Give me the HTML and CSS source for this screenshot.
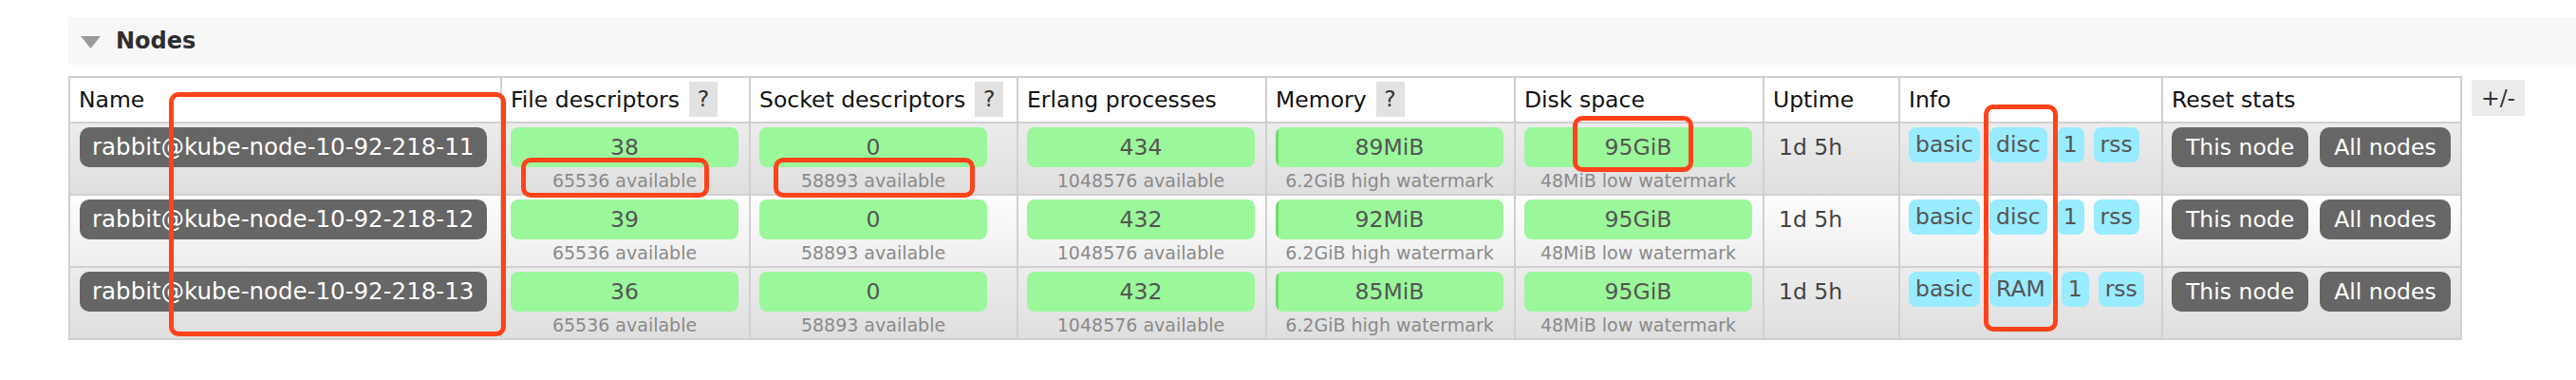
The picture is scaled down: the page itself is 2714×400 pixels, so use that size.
FILE: index.html
```html
<!DOCTYPE html>
<html>
<head>
<meta charset="utf-8">
<title>Nodes</title>
<link rel="stylesheet" href="styles.css">
</head>
<body>
<div class="page">
  <div class="section-head">
    <svg class="tri" width="21" height="13" viewBox="0 0 21 13"><polygon points="0,0 21,0 10.5,13" fill="#9b9b9b"/></svg>
    <h2 class="title">Nodes</h2>
  </div>
  <div class="table-wrap">
    <table class="list">
      <thead>
        <tr>
          <th class="c-name">Name</th>
          <th class="c-fd">File descriptors<span class="help">?</span></th>
          <th class="c-sd">Socket descriptors<span class="help">?</span></th>
          <th class="c-ep">Erlang processes</th>
          <th class="c-mem">Memory<span class="help">?</span></th>
          <th class="c-disk">Disk space</th>
          <th class="c-up">Uptime</th>
          <th class="c-info">Info</th>
          <th class="c-reset">Reset stats</th>
        </tr>
      </thead>
      <tbody>
        <tr class="alt1">
          <td><span class="node">rabbit@kube-node-10-92-218-11</span></td>
          <td><div class="bar">38</div><div class="sub">65536 available</div></td>
          <td><div class="bar">0</div><div class="sub">58893 available</div></td>
          <td><div class="bar">434</div><div class="sub">1048576 available</div></td>
          <td><div class="bar"><span class="fill" style="width:1.4%"></span><span class="val">89MiB</span></div><div class="sub">6.2GiB high watermark</div></td>
          <td><div class="bar">95GiB</div><div class="sub">48MiB low watermark</div></td>
          <td><div class="uptime">1d 5h</div></td>
          <td><div class="tags"><span class="tag">basic</span><span class="tag">disc</span><span class="tag">1</span><span class="tag">rss</span></div></td>
          <td><div class="btns"><span class="btn">This node</span><span class="btn">All nodes</span></div></td>
        </tr>
        <tr class="alt2">
          <td><span class="node">rabbit@kube-node-10-92-218-12</span></td>
          <td><div class="bar">39</div><div class="sub">65536 available</div></td>
          <td><div class="bar">0</div><div class="sub">58893 available</div></td>
          <td><div class="bar">432</div><div class="sub">1048576 available</div></td>
          <td><div class="bar"><span class="fill" style="width:1.4%"></span><span class="val">92MiB</span></div><div class="sub">6.2GiB high watermark</div></td>
          <td><div class="bar">95GiB</div><div class="sub">48MiB low watermark</div></td>
          <td><div class="uptime">1d 5h</div></td>
          <td><div class="tags"><span class="tag">basic</span><span class="tag">disc</span><span class="tag">1</span><span class="tag">rss</span></div></td>
          <td><div class="btns"><span class="btn">This node</span><span class="btn">All nodes</span></div></td>
        </tr>
        <tr class="alt1">
          <td><span class="node">rabbit@kube-node-10-92-218-13</span></td>
          <td><div class="bar">36</div><div class="sub">65536 available</div></td>
          <td><div class="bar">0</div><div class="sub">58893 available</div></td>
          <td><div class="bar">432</div><div class="sub">1048576 available</div></td>
          <td><div class="bar"><span class="fill" style="width:1.3%"></span><span class="val">85MiB</span></div><div class="sub">6.2GiB high watermark</div></td>
          <td><div class="bar">95GiB</div><div class="sub">48MiB low watermark</div></td>
          <td><div class="uptime">1d 5h</div></td>
          <td><div class="tags"><span class="tag">basic</span><span class="tag">RAM</span><span class="tag">1</span><span class="tag">rss</span></div></td>
          <td><div class="btns"><span class="btn">This node</span><span class="btn">All nodes</span></div></td>
        </tr>
      </tbody>
    </table>
    <span class="toggle">+/-</span>
  </div>

  <div class="mark mark-name"></div>
  <div class="mark mark-fd"></div>
  <div class="mark mark-sd"></div>
  <div class="mark mark-disk"></div>
  <div class="mark mark-info"></div>
</div>
</body>
</html>
```

FILE: styles.css
```css
html, body {
  margin: 0;
  padding: 0;
  background: #ffffff;
}

body {
  font-family: "DejaVu Sans", Verdana, sans-serif;
  font-size: 23.5px;
  color: #222;
}

.page {
  position: relative;
  width: 2714px;
  height: 400px;
  padding: 18px 0 0 72px;
  box-sizing: border-box;
  overflow: hidden;
}

.section-head {
  display: flex;
  align-items: center;
  gap: 16px;
  height: 50px;
  padding-left: 13px;
  background: #f7f7f7;
  margin-right: -2px;
}

.tri {
  display: block;
  margin-top: 2px;
}

.title {
  margin: 0;
  font-size: 24px;
  font-weight: bold;
  color: #2e2e2e;
}

.table-wrap {
  display: flex;
  align-items: flex-start;
  margin-top: 12px;
}

.list {
  table-layout: fixed;
  width: 2522px;
  border-collapse: separate;
  border-spacing: 0;
  border-top: 2px solid #d0d0d0;
  border-left: 2px solid #d0d0d0;
}

.list th,
.list td {
  box-sizing: border-box;
  border-right: 2px solid #d0d0d0;
  border-bottom: 2px solid #d0d0d0;
  padding: 4px 9px 0;
  text-align: left;
  vertical-align: top;
}

.list th {
  font-weight: normal;
  line-height: 38px;
  padding-bottom: 4px;
  background: #ffffff;
  color: #111;
  white-space: nowrap;
}

.c-name { width: 455px; }
.c-fd { width: 262px; }
.c-sd { width: 282px; }
.c-ep { width: 262px; }
.c-mem { width: 262px; }
.c-disk { width: 262px; }
.c-up { width: 143px; }
.c-info { width: 277px; }
.c-reset { width: 315px; }

.help {
  display: inline-block;
  vertical-align: top;
  width: 30px;
  height: 37px;
  line-height: 37px;
  margin-left: 10px;
  text-align: center;
  background: #e2e2e2;
  color: #333;
}

.list td {
  height: 76px;
}

tr.alt1 td {
  background: linear-gradient(#ececec, #dfdfdf);
}

tr.alt2 td {
  background: linear-gradient(#fdfdfd, #eeeeee);
}

.node {
  display: inline-block;
  height: 42px;
  line-height: 42px;
  padding: 0 14px 0 13px;
  margin-left: 1px;
  border-radius: 10px;
  background: #666666;
  color: #ffffff;
  font-size: 24.5px;
  white-space: nowrap;
}

.bar {
  position: relative;
  width: 240px;
  height: 42px;
  line-height: 42px;
  text-align: center;
  background: #9af79a;
  border-radius: 8px;
  color: #555;
  overflow: hidden;
}

.fill {
  position: absolute;
  left: 0;
  top: 0;
  bottom: 0;
  background: #6fdc6f;
}

.val {
  position: relative;
}

.sub {
  width: 240px;
  text-align: center;
  font-size: 19px;
  line-height: 28px;
  color: #8a8a8a;
  white-space: nowrap;
}

.uptime {
  line-height: 42px;
  margin-left: 6px;
  color: #444;
}

.tags {
  display: flex;
  gap: 10px;
}

.tag {
  display: block;
  height: 37px;
  line-height: 37px;
  padding: 0 7px;
  border-radius: 8px;
  background: #99ebff;
  color: #555;
}

.btns {
  display: flex;
  gap: 12px;
}

.btn {
  display: block;
  height: 42px;
  line-height: 42px;
  padding: 0 15px;
  border-radius: 10px;
  background: #666666;
  color: #ffffff;
  white-space: nowrap;
}

.toggle {
  display: block;
  width: 56px;
  height: 38px;
  line-height: 38px;
  margin: 4px 0 0 10px;
  text-align: center;
  background: #ececec;
  color: #333;
}

.mark {
  position: absolute;
  box-sizing: border-box;
  border: 5px solid #ff4219;
  border-radius: 10px;
}

.mark-name { left: 178px; top: 97px; width: 355px; height: 257px; }
.mark-fd { left: 549px; top: 166px; width: 198px; height: 42px; }
.mark-sd { left: 815px; top: 166px; width: 212px; height: 42px; }
.mark-disk { left: 1657px; top: 122px; width: 127px; height: 59px; }
.mark-info { left: 2090px; top: 110px; width: 78px; height: 239px; }
```
